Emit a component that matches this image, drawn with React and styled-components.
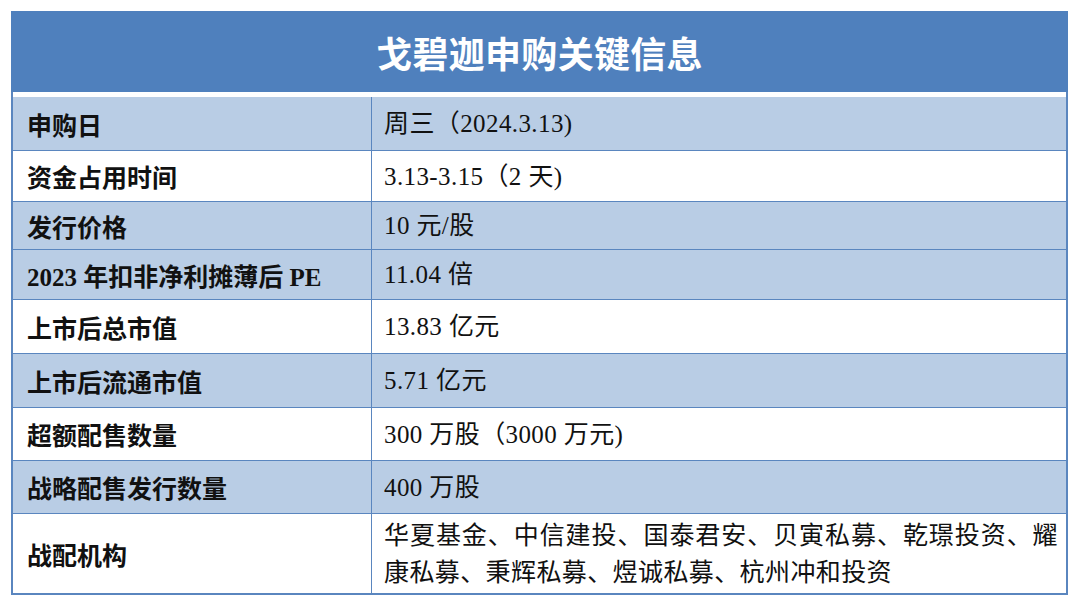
import React from "react";
import styled, { createGlobalStyle } from "styled-components";

const Global = createGlobalStyle`
  html, body { margin: 0; padding: 0; background: #ffffff; }
  body { font-family: "Liberation Serif", "Noto Sans CJK SC", serif; }
`;

const Page = styled.div`
  padding: 11px 12px 0 11px;
  width: 1080px;
  height: 607px;
  box-sizing: border-box;
`;

const Frame = styled.div`
  width: 1057px;
  border-left: 2px solid #5a86bf;
  border-right: 2px solid #5a86bf;
  border-bottom: 2px solid #5a86bf;
  box-sizing: border-box;
  background: #ffffff;
`;

const Title = styled.div`
  height: 81px;
  margin: 0 -2px;
  background: #4f80bd;
  color: #ffffff;
  display: flex;
  align-items: center;
  justify-content: center;
  font-family: "Noto Sans CJK SC", sans-serif;
  font-weight: 700;
  font-size: 36px;
  letter-spacing: 0.3px;
`;

const Gap = styled.div`
  height: 5px;
  background: #ffffff;
`;

const Row = styled.div`
  display: grid;
  grid-template-columns: 359px 1fr;
  height: ${(p) => p.$h}px;
  background: ${(p) => (p.$shade ? "#b9cde5" : "#ffffff")};
  border-top: ${(p) => (p.$first ? "none" : "1.5px solid #5a86bf")};
  box-sizing: border-box;
`;

const Label = styled.div`
  display: flex;
  align-items: center;
  padding-left: 14px;
  border-right: 1.5px solid #5a86bf;
  font-family: "Liberation Serif", "Noto Sans CJK SC", serif;
  font-weight: 700;
  font-size: 25px;
  color: #111111;
  white-space: nowrap;
`;

const Value = styled.div`
  display: flex;
  align-items: center;
  padding: 0 8px 0 12px;
  font-family: "Liberation Serif", "Noto Sans CJK SC", serif;
  font-weight: 400;
  font-size: 25px;
  letter-spacing: 0.4px;
  line-height: 37px;
  color: #111111;
  text-align: justify;
`;

const rows = [
  { label: "申购日", value: "周三（2024.3.13)", h: 53, shade: true },
  { label: "资金占用时间", value: "3.13-3.15（2 天)", h: 51, shade: false },
  { label: "发行价格", value: "10 元/股", h: 48, shade: true },
  { label: "2023 年扣非净利摊薄后 PE", value: "11.04 倍", h: 50, shade: true },
  { label: "上市后总市值", value: "13.83 亿元", h: 54, shade: false },
  { label: "上市后流通市值", value: "5.71 亿元", h: 54, shade: true },
  { label: "超额配售数量", value: "300 万股（3000 万元)", h: 53, shade: false },
  { label: "战略配售发行数量", value: "400 万股", h: 53, shade: true },
  {
    label: "战配机构",
    value:
      "华夏基金、中信建投、国泰君安、贝寅私募、乾璟投资、耀康私募、秉辉私募、煜诚私募、杭州冲和投资",
    h: 80,
    shade: false,
  },
];

export default function App() {
  return (
    <>
      <Global />
      <Page>
        <Frame>
          <Title>戈碧迦申购关键信息</Title>
          <Gap />
          {rows.map((r, i) => (
            <Row key={i} $h={r.h} $shade={r.shade} $first={i === 0}>
              <Label>{r.label}</Label>
              <Value>{r.value}</Value>
            </Row>
          ))}
        </Frame>
      </Page>
    </>
  );
}
